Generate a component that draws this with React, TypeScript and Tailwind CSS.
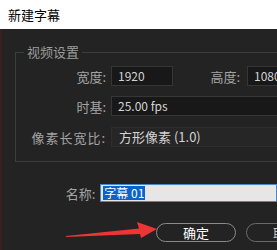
import React from 'react'

const font = { fontFamily: '"Noto Sans CJK SC", "Liberation Sans", sans-serif' }

const Label = ({ text, className = '' }: { text: string; className?: string }) => (
	<div className={`text-[13px] leading-none text-[#a3a3a3] text-right ${className}`}>{text}</div>
)

const DarkInput = ({ value, className = '' }: { value: string; className?: string }) => (
	<div className={`h-[20px] bg-[#181818] border border-[#363636] flex items-center pl-[6px] text-[12px] text-[#d4d4d4] ${className}`}>
		{value}
	</div>
)

export default function App() {
	return (
		<div className="w-[277px] h-[250px] overflow-hidden flex flex-col bg-[#232323]" style={font}>
			{/* title bar */}
			<div className="h-[29px] shrink-0 bg-white flex items-center pl-[8px] text-[13px] text-black">
				新建字幕
			</div>

			<div className="flex-1 flex flex-col border-l-2 border-[#3b1f1f] relative">
				{/* video settings group */}
				<fieldset className="ml-[13px] mt-[15px] w-[300px] h-[118px] shrink-0 border border-[#3d3d3d] pl-0 pt-[6px]">
					<legend className="ml-[8px] px-[3px] text-[13px] leading-[16px] text-[#9c9c9c]">视频设置</legend>
					<div className="flex items-center">
						<Label text="宽度:" className="w-[90px]" />
						<DarkInput value="1920" className="ml-[5px] w-[62px]" />
						<Label text="高度:" className="w-[67px]" />
						<DarkInput value="1080" className="ml-[7px] w-[60px]" />
					</div>
					<div className="flex items-center mt-[10px]">
						<Label text="时基:" className="w-[90px]" />
						<DarkInput value="25.00 fps" className="ml-[5px] w-[200px] h-[19px] border-[#2e2e2e] bg-[#1d1d1d]" />
					</div>
					<div className="flex items-center mt-[11px]">
						<Label text="像素长宽比:" className="w-[90px] tracking-[1px]" />
						<div className="ml-[5px] w-[200px] h-[20px] bg-[#262626] border border-[#2e2e2e] flex items-center pl-[7px] text-[13px] text-[#d4d4d4]">
							方形像素 (1.0)
						</div>
					</div>
				</fieldset>

				{/* name row */}
				<div className="flex items-center mt-[22px] ml-[14px]">
					<Label text="名称:" className="w-[90px]" />
					<div className="ml-[5px] w-[200px] h-[18px] bg-[#e6e6e6] border border-[#4a86c5] flex items-center pl-[2px]">
						<span className="bg-[#0a63c9] text-white text-[12px] leading-[14px] px-[1px]">字幕 01</span>
					</div>
				</div>

				{/* buttons */}
				<div className="flex items-center mt-[21px] ml-[154px] gap-[10px]">
					<div className="w-[80px] h-[19px] shrink-0 rounded-full border border-[#8a8a8a] flex items-center justify-center text-[13px] text-white">
						确定
					</div>
					<div className="w-[80px] h-[19px] shrink-0 rounded-full border border-[#6a6a6a] flex items-center justify-center text-[13px] text-[#cfcfcf]">
						取消
					</div>
				</div>

				{/* red arrow annotation */}
				<svg className="absolute left-0 top-0" width="277" height="221" viewBox="0 29 277 221">
					<polygon points="64,236 137,228.5 135,222 155,229 139,238 138,234 64,237" fill="#ee3434" />
				</svg>
			</div>
		</div>
	)
}
